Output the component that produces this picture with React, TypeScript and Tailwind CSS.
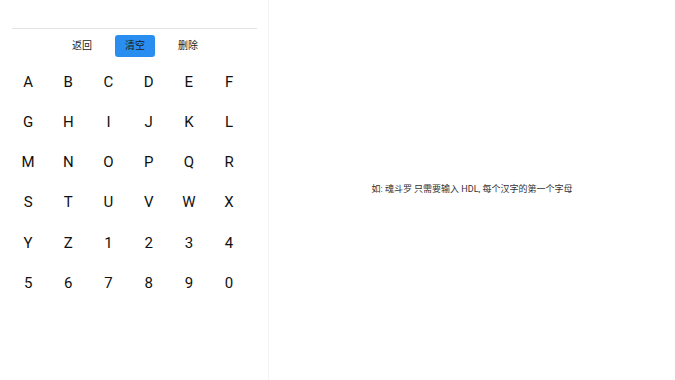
const keys = "ABCDEFGHIJKLMNOPQRSTUVWXYZ1234567890".split("");

export default function App() {
  return (
    <div className="flex h-[380px] w-[675px] bg-white font-['Roboto','Noto_Sans_CJK_SC',sans-serif] text-black">
      <div className="w-[269px] shrink-0 border-r border-[#f3f3f3] pt-[28px]">
        <div className="mx-[12px] mr-[11px] border-t border-[#e4e4e4]" />
        <div className="flex h-[33px] items-center pl-[62px] text-[10px]">
          <button className="h-[22px] w-[40px] text-[#222]">返回</button>
          <button className="ml-[13px] h-[22px] w-[40px] rounded-[3px] bg-[#2a8ef0] text-[#1a1a1a]">
            清空
          </button>
          <button className="ml-[13px] h-[22px] w-[40px] text-[#222]">删除</button>
        </div>
        <div className="grid grid-cols-[repeat(6,40.2px)] pl-[8px]">
          {keys.map((k) => (
            <div
              key={k}
              className="flex h-[40.2px] items-center justify-center text-[15px] text-[#111]"
            >
              {k}
            </div>
          ))}
        </div>
      </div>
      <div className="flex flex-1 items-center justify-center pb-[1px] text-[9px] text-[#333]">
        如: 魂斗罗 只需要输入 HDL, 每个汉字的第一个字母
      </div>
    </div>
  );
}
